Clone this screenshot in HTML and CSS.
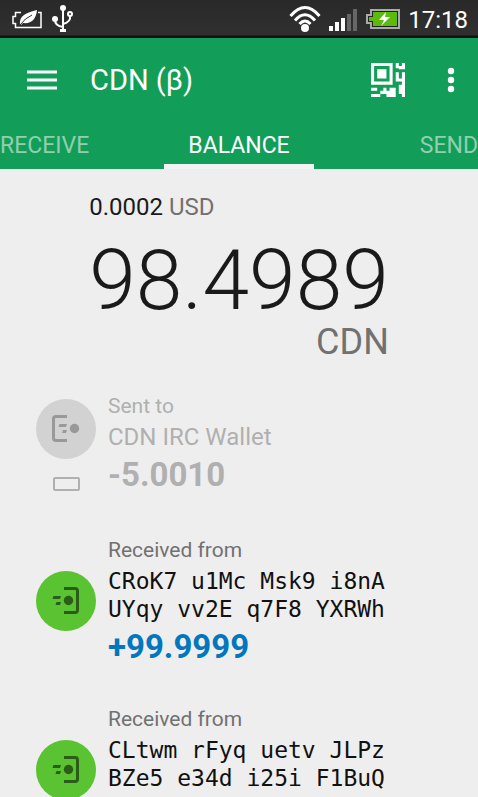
FILE: index.html
```html
<!DOCTYPE html>
<html lang="en">
<head>
<meta charset="utf-8">
<meta name="viewport" content="width=device-width, initial-scale=1">
<title>CDN Wallet</title>
<link rel="stylesheet" href="styles.css">
</head>
<body>
<svg class="symbols" aria-hidden="true">
  <symbol id="received" viewBox="0 0 60 60">
    <path d="M28 17.500H39Q41.500 17.500 41.500 20V39Q41.500 41.500 39 41.500H28" fill="none" stroke="currentColor" stroke-width="3"/>
    <circle cx="32.500" cy="29.500" r="4.700" fill="currentColor"/>
    <path d="M17.500 25H25L24 28H16.500ZM20.500 31H25L24 34H19.500Z" fill="currentColor"/>
  </symbol>
  <symbol id="sent" viewBox="0 0 60 60">
    <path d="M31 17.500H20Q17.500 17.500 17.500 20V39Q17.500 41.500 20 41.500H31" fill="none" stroke="currentColor" stroke-width="3"/>
    <circle cx="38.500" cy="29.500" r="4.700" fill="currentColor"/>
    <path d="M23.500 25H31L30 28H22.500ZM27 31H31L30 34H26Z" fill="currentColor"/>
  </symbol>
</svg>

<div class="status">
  <div class="notices">
    <svg width="30" height="19" viewBox="0 0 30 19" aria-hidden="true">
      <path d="M9 2.500H3.500V6.500H1V13.500H3.500V17.500H29V2.500H26" fill="none" stroke="#fff" stroke-width="1.500"/>
      <path d="M8 15C7 5 14 3 25 0C24 10 19 14 11 13L9 15Z" fill="#fff"/>
      <path d="M8 15Q13 8 20 5" fill="none" stroke="#333" stroke-width="1"/>
    </svg>
    <svg width="22" height="28" viewBox="0 0 22 28" aria-hidden="true">
      <g fill="none" stroke="#fff" stroke-width="2"><path d="M11 4V26M3 15Q3 21 11 22M18 11Q19 17 11 19"/><circle cx="18" cy="9" r="2"/></g>
      <g fill="#fff"><circle cx="11" cy="3" r="3"/><circle cx="3" cy="14" r="3"/><path d="M8 24H14V27H8Z"/></g>
    </svg>
  </div>
  <svg width="32" height="28" viewBox="0 0 32 28" aria-hidden="true">
    <g fill="none" stroke="#fff" stroke-width="3"><path d="M1.500 11Q16 -6 30.500 11M6 15.500Q16 4 26 15.500M10.500 19Q16 13 21.500 19"/></g><circle cx="16" cy="23" r="4" fill="#fff"/>
  </svg>
  <svg class="signal" width="29" height="22" viewBox="0 0 29 22" aria-hidden="true"><path d="M0 17H4V22H0ZM6 13H10V22H6ZM12 9H16V22H12Z" fill="#fff"/><path d="M18 5H22V22H18ZM24 0H28V22H24Z" fill="#666"/></svg>
  <svg width="34" height="20" viewBox="0 0 34 20" aria-hidden="true"><path d="M5 1H33V19H5V14H1V6H5Z" fill="#222" stroke="#aaa" stroke-width="2"/><path d="M7 3H31V17H7V12H3V8H7Z" fill="#5cba0c"/><path d="M20 3L13 11H18L15 17L24 8H19Z" fill="#fff"/></svg>
  <time class="clock">17:18</time>
</div>

<header class="header">
  <div class="toolbar">
    <button class="icon" aria-label="Menu"><svg width="32" height="20" viewBox="0 0 32 20"><path d="M1 2H31M1 10H31M1 18H31" stroke="#fff" stroke-width="3"/></svg></button>
    <h1>CDN (β)</h1>
    <button class="icon" aria-label="Scan QR code"><svg width="34" height="34" viewBox="0 0 33 33" fill="#fff"><path fill-rule="evenodd" d="M0 0H21V21H0ZM3 3V18H18V3Z"/><path d="M6 6H15V15H6ZM24 0H27V3H30V6H27V5H24ZM30 0H33V6H27V3H30ZM24 9H27V15H30V9H33V30H33V33H30V30H27V21H30V18H24ZM0 24H6V27H0ZM12 24H15V27H18V24H24V33H15V30H9V27H12ZM0 30H9V33H0Z"/></svg></button>
    <button class="icon more" aria-label="More options"><svg width="8" height="26" viewBox="0 0 8 26" fill="#fff"><circle cx="4" cy="4" r="3.200"/><circle cx="4" cy="13" r="3.200"/><circle cx="4" cy="22" r="3.200"/></svg></button>
  </div>
  <nav class="tabs">
    <a href="#receive">RECEIVE</a>
    <a class="active" href="#balance" aria-current="page">BALANCE</a>
    <a href="#send">SEND</a>
  </nav>
</header>

<main>
  <section class="balance" aria-label="Balance">
    <p class="fiat">0.0002 <span>USD</span></p>
    <p class="amount">98.4989</p>
    <p class="unit">CDN</p>
  </section>
  <ul class="history">
    <li class="pending">
      <div class="marks"><svg class="badge" aria-hidden="true"><use href="#sent"/></svg><span class="bar"></span></div>
      <div><p class="kind">Sent to</p><p class="name">CDN IRC Wallet</p><p class="value">-5.0010</p></div>
    </li>
    <li>
      <div class="marks"><svg class="badge" aria-hidden="true"><use href="#received"/></svg></div>
      <div><p class="kind">Received from</p><p class="address">CRoK7 u1Mc Msk9 i8nA<br>UYqy vv2E q7F8 YXRWh</p><p class="value">+99.9999</p></div>
    </li>
    <li>
      <div class="marks"><svg class="badge" aria-hidden="true"><use href="#received"/></svg></div>
      <div><p class="kind">Received from</p><p class="address">CLtwm rFyq uetv JLPz<br>BZe5 e34d i25i F1BuQ</p></div>
    </li>
  </ul>
</main>
</body>
</html>
```
FILE: styles.css
```css
* { box-sizing: border-box; }
body { margin: 0; height: 100vh; overflow: hidden; background: #eee; color: #1a1a1a; font-family: Roboto, sans-serif; }
p, h1, ul { margin: 0; padding: 0; font-weight: 400; }
svg { display: block; flex: none; }
.symbols { position: absolute; width: 0; height: 0; }
.status { display: flex; align-items: center; gap: 8px; height: 38px; padding: 0 10px 0 12px; background: linear-gradient(#292929, #303030 35px, #111 36px); color: #fff; }
.notices { flex: 1; display: flex; align-items: center; gap: 10px; }
.signal { margin-top: 2px; }
.clock { font-size: 24px; line-height: 28px; padding-top: 2px; }
.header { background: #129e59; color: #fff; }
.toolbar { display: flex; align-items: center; height: 84px; padding: 0 23px 0 26px; }
.toolbar h1 { flex: 1; margin-left: 32px; font-size: 29px; }
.icon { padding: 0; border: 0; background: none; }
.more { margin-left: 42px; }
.tabs { display: grid; grid-template: 47px / 1fr 150px 1fr; line-height: 48px; font-size: 23px; }
.tabs a { color: #91cfae; text-decoration: none; }
.tabs a:last-child { text-align: right; }
.tabs .active { color: #fff; text-align: center; border-bottom: 5px solid #f3f3f3; }
.balance { width: max-content; margin: 0 auto; padding-top: 24px; }
.fiat { font-size: 24px; line-height: 28px; }
.fiat span, .unit { color: #717171; }
.amount { font-size: 84px; line-height: 92px; font-weight: 300; margin-top: 14px; }
.unit { font-size: 36px; line-height: 30px; text-align: right; }
.history { list-style: none; padding: 35px 36px 0; }
.history li { display: flex; gap: 12px; margin-bottom: 39px; }
.marks { display: flex; flex-direction: column; align-items: center; gap: 18px; padding-top: 35px; }
.badge { width: 60px; height: 60px; border-radius: 50%; background: #5ac331; color: #2b5d18; }
.kind { font-size: 21px; line-height: 28px; color: #717171; }
.address { font-family: "DejaVu Sans Mono", monospace; font-size: 23px; line-height: 28px; padding: 3px 0 5px; color: #111; }
.value { font-size: 33px; line-height: 38px; font-weight: 700; color: #0277bd; }
.history .pending { padding-bottom: 3px; }
.pending .marks { padding-top: 7px; }
.pending .badge { background: #d2d2d2; color: #999; }
.pending .kind, .pending .name, .pending .value { color: #b0b0b0; }
.name { font-size: 24px; line-height: 34px; padding-bottom: 2px; }
.bar { width: 27px; height: 14px; border: 2px solid #b0b0b0; border-radius: 2px; }
```
